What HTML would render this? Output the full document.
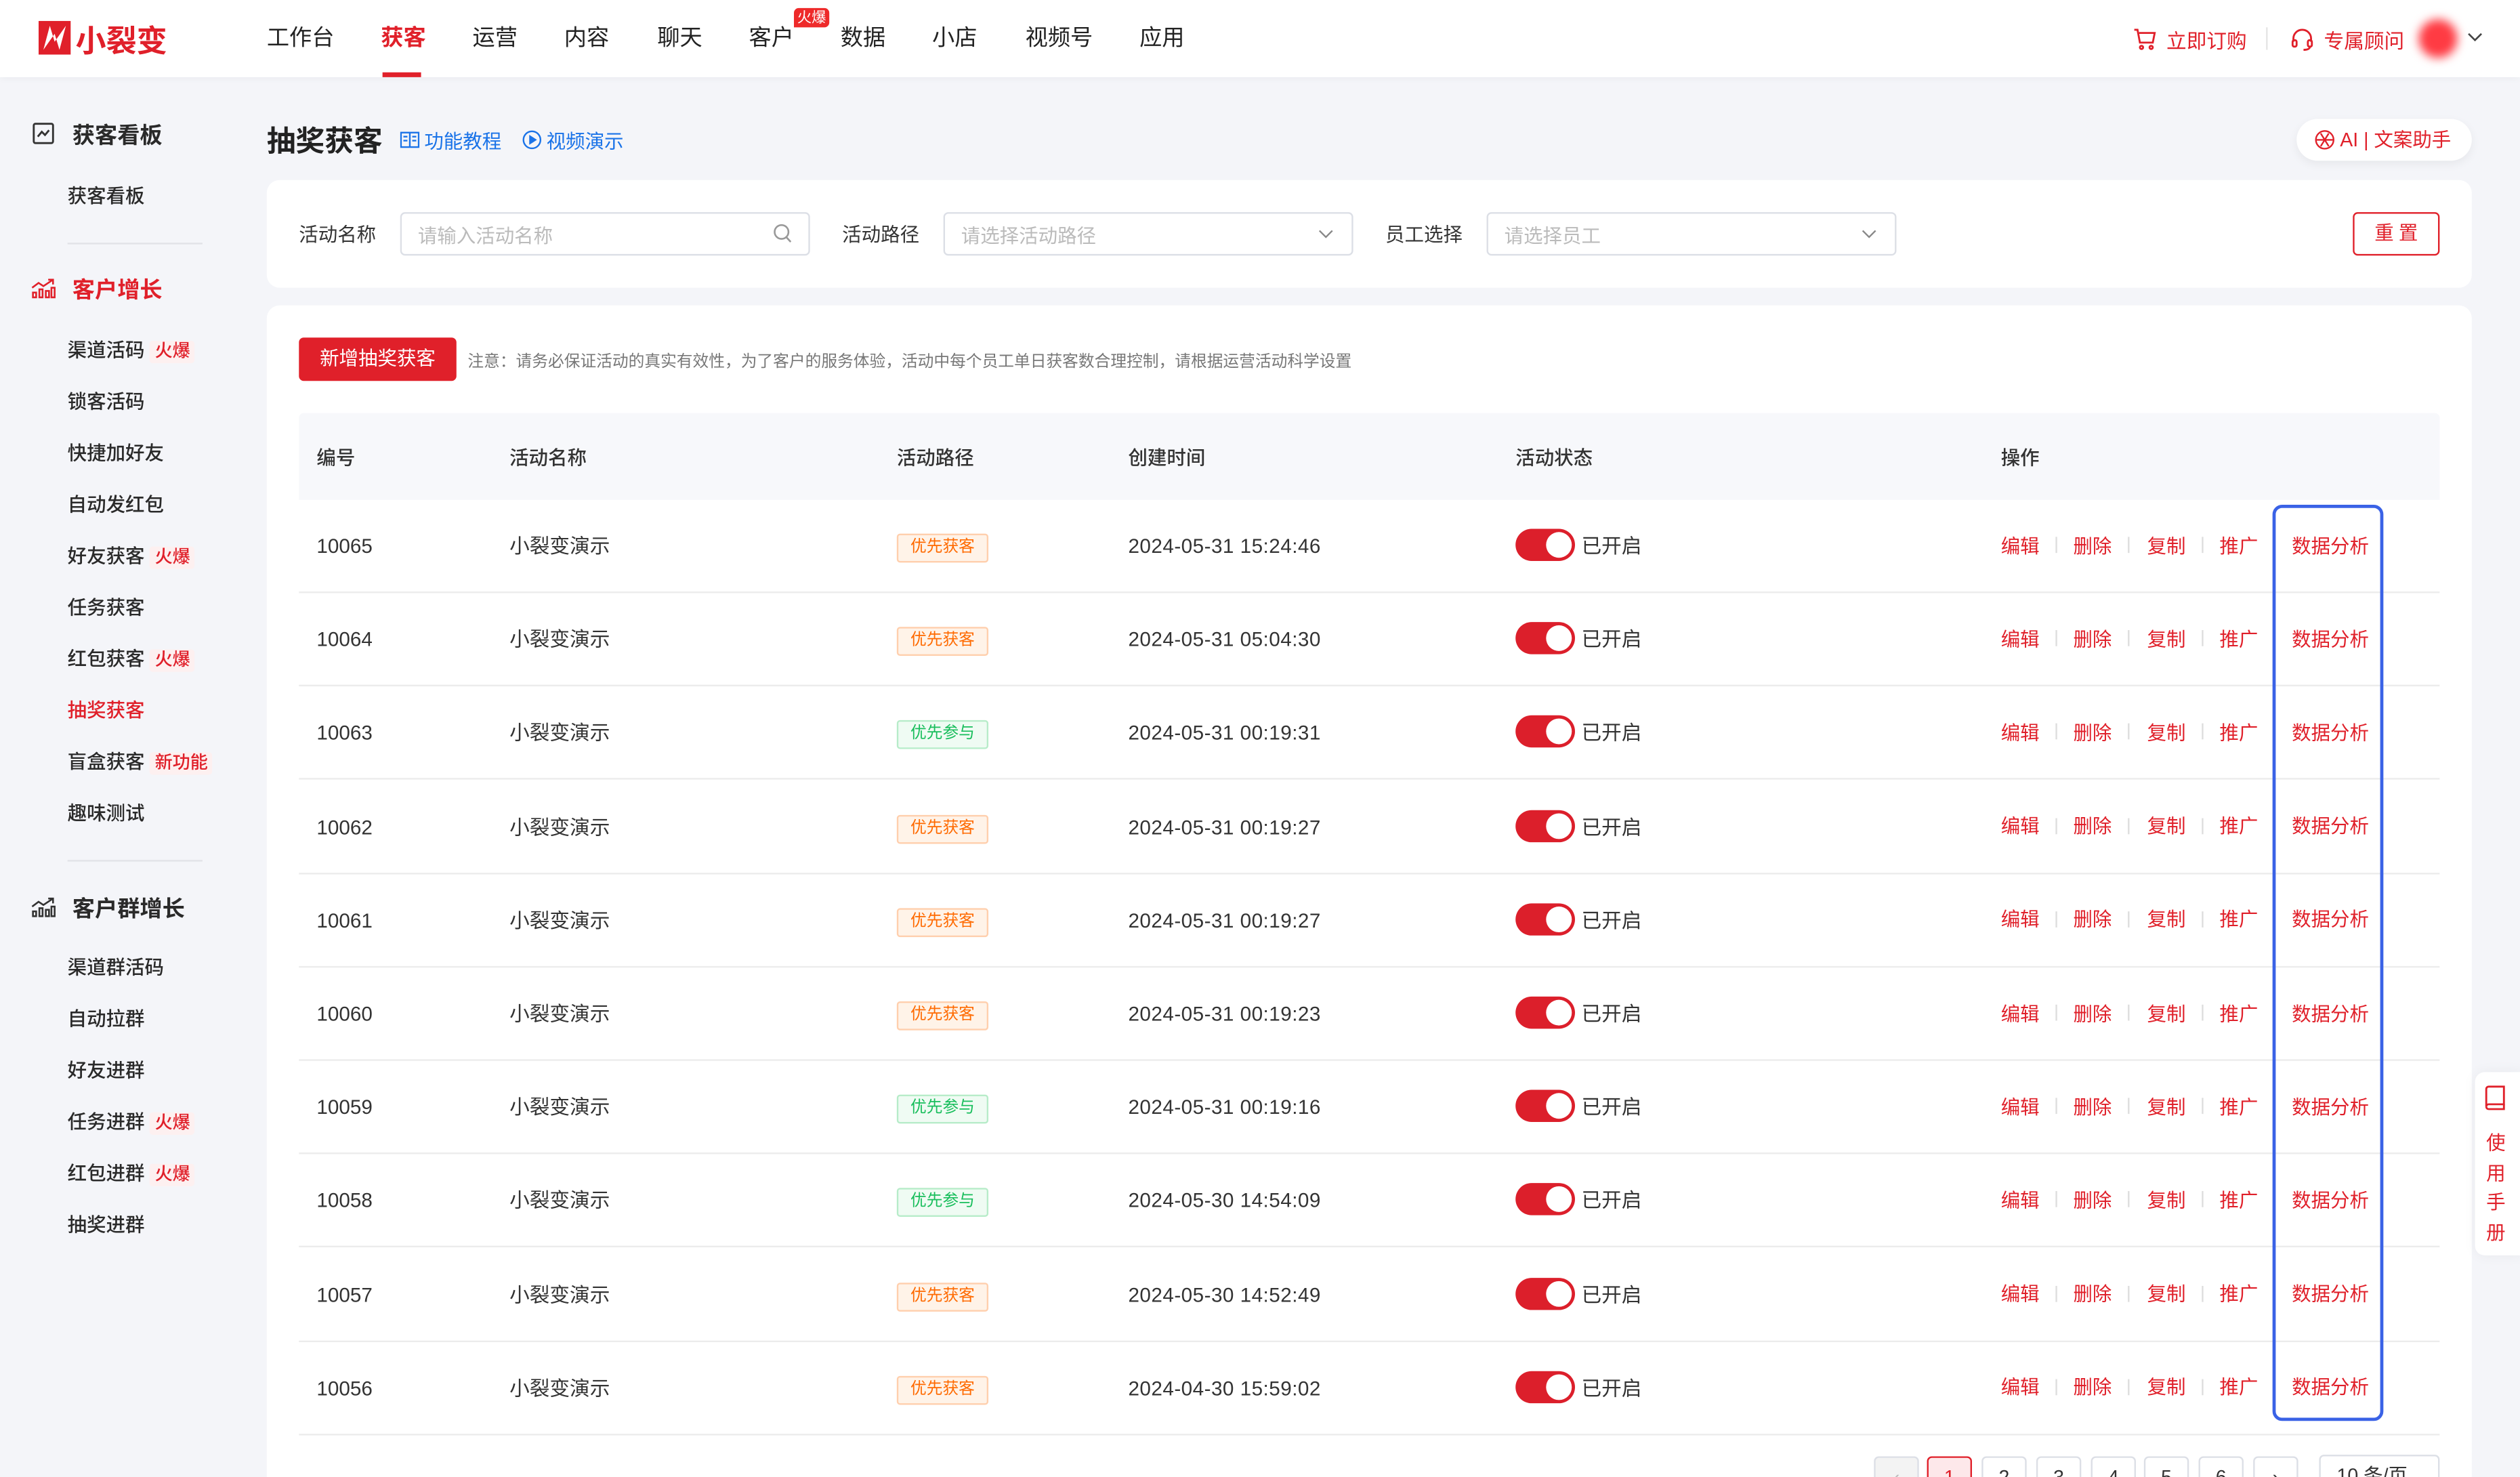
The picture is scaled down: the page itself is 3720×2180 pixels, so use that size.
<!DOCTYPE html>
<html><head><meta charset="utf-8">
<style>
*{margin:0;padding:0;box-sizing:border-box}
html,body{width:3720px;height:2180px;overflow:hidden;background:#f5f6fa}
body{font-family:"Liberation Sans","Noto Sans CJK SC",sans-serif;color:#222}
#root{position:absolute;left:0;top:0;width:1568px;height:919px;transform:scale(2.372449);transform-origin:0 0;overflow:hidden;background:#f4f5f9}
.a{position:absolute;white-space:nowrap}
.hdr{left:0;top:0;width:1568px;height:48px;background:#fff;box-shadow:0 1px 4px rgba(0,0,0,.04)}
.nav{top:13px;font-size:14px;color:#222}
.sb{font-size:12px;color:#2a2a2a;font-weight:500}
.sh{font-size:14px;font-weight:bold;color:#2a2a2a}
.hot{font-size:11px;color:#e0202a;background:#fdf0f0;padding:1px 3px;border-radius:2px}
.card{background:#fff;border-radius:8px}
.lbl{font-size:12px;color:#333}
.inp{height:27px;border:1px solid #dcdfe6;border-radius:3px;background:#fff;font-size:12px;color:#bbb;padding:5px 10px}
.th{font-size:12px;color:#333;font-weight:500;top:276px}
.td{font-size:12.5px;color:#333}
.tag{font-size:10px;width:57px;height:18px;border-radius:2px;text-align:center;line-height:16px}
.or{background:#fff3e8;border:1px solid #ffcfad;color:#ff6a00}
.gr{background:#effbf3;border:1px solid #b7ecc9;color:#19be5c}
.tg{width:37px;height:20px;border-radius:10px;background:#dc1f2b}
.tg:after{content:"";position:absolute;right:2px;top:2px;width:16px;height:16px;border-radius:50%;background:#fff}
.op{font-size:12px;color:#e0202a}
.sep{width:1px;height:10px;background:#ddd}
.ln{height:1px;background:#ececec;left:186px;width:1332px}
.pg{width:28px;height:26px;border:1px solid #dcdfe6;border-radius:3px;background:#fff;font-size:12px;text-align:center;line-height:24px;color:#333}
</style></head><body><div id="root">

<div class="a hdr"></div>
<svg class="a" style="left:24px;top:13px" width="20" height="21" viewBox="0 0 20 21"><rect width="20" height="21" fill="#e0202a"/><path d="M3 18 L7 3 L10 13 L17 3 L13 18 L10 8 Z" fill="#fff"/></svg>
<div class="a" style="left:47px;top:11px;font-size:19px;color:#e0202a;font-weight:bold">小裂变</div>
<div class="a nav" style="left:166px">工作台</div>
<div class="a nav" style="left:237px;color:#e0202a;font-weight:bold">获客</div>
<div class="a" style="left:238px;top:45px;width:24px;height:3px;background:#e0202a"></div>
<div class="a nav" style="left:294px">运营</div>
<div class="a nav" style="left:351px">内容</div>
<div class="a nav" style="left:409px">聊天</div>
<div class="a nav" style="left:466px">客户</div>
<div class="a" style="left:494px;top:5px;font-size:9px;color:#fff;background:#ee2a2a;padding:0 2px;border-radius:3px 3px 3px 0;line-height:12px">火爆</div>
<div class="a nav" style="left:523px">数据</div>
<div class="a nav" style="left:580px">小店</div>
<div class="a nav" style="left:638px">视频号</div>
<div class="a nav" style="left:709px">应用</div>

<svg class="a" style="left:1327px;top:17px" width="15" height="15" viewBox="0 0 15 15" fill="none" stroke="#e0202a" stroke-width="1.2"><path d="M1 1.5h2l1.5 8h8l1.2-6H4"/><circle cx="5.5" cy="12.5" r="1"/><circle cx="11.5" cy="12.5" r="1"/></svg>
<div class="a" style="left:1348px;top:15px;font-size:12.5px;color:#e0202a">立即订购</div>
<div class="a" style="left:1410px;top:17px;width:1px;height:14px;background:#e5e5e5"></div>
<svg class="a" style="left:1425px;top:17px" width="15" height="15" viewBox="0 0 15 15" fill="none" stroke="#e0202a" stroke-width="1.2"><path d="M2 9V7a5.5 5.5 0 0111 0v2"/><rect x="1.5" y="8" width="2.5" height="4" rx="1"/><rect x="11" y="8" width="2.5" height="4" rx="1"/><path d="M12.3 12c0 1.5-2 2-4 2"/></svg>
<div class="a" style="left:1446px;top:15px;font-size:12.5px;color:#e0202a">专属顾问</div>
<div class="a" style="left:1505px;top:12px;width:24px;height:24px;border-radius:50%;background:#ff3b43;filter:blur(3px)"></div>
<svg class="a" style="left:1535px;top:19px" width="10" height="8" viewBox="0 0 10 8" fill="none" stroke="#444" stroke-width="1.1"><path d="M1 2l4 4 4-4"/></svg>

<!-- sidebar -->
<svg class="a" style="left:20px;top:76px" width="14" height="14" viewBox="0 0 14 14" fill="none" stroke="#333" stroke-width="1.2"><rect x="1" y="1" width="12" height="12" rx="1"/><path d="M3.5 9l2.5-3 2 2 2.5-3"/></svg>
<div class="a sh" style="left:45px;top:74px">获客看板</div>
<div class="a sb" style="left:42px;top:113px">获客看板</div>
<div class="a" style="left:42px;top:151px;width:84px;height:1px;background:#e2e3e8"></div>
<svg class="a" style="left:19px;top:172px" width="16" height="14" viewBox="0 0 16 14" fill="none" stroke="#e0202a" stroke-width="1.1"><path d="M1 7l4-3 3 2 6-4"/><path d="M11 2h3v3"/><rect x="1.5" y="10" width="2" height="3"/><rect x="5.5" y="8" width="2" height="5"/><rect x="9.5" y="9" width="2" height="4"/><rect x="13" y="7" width="2" height="6"/></svg>
<div class="a sh" style="left:45px;top:170px;color:#e0202a">客户增长</div>
<div class="a sb" style="left:42px;top:209px">渠道活码 <span class="hot">火爆</span></div>
<div class="a sb" style="left:42px;top:241px">锁客活码</div>
<div class="a sb" style="left:42px;top:273px">快捷加好友</div>
<div class="a sb" style="left:42px;top:305px">自动发红包</div>
<div class="a sb" style="left:42px;top:337px">好友获客 <span class="hot">火爆</span></div>
<div class="a sb" style="left:42px;top:369px">任务获客</div>
<div class="a sb" style="left:42px;top:401px">红包获客 <span class="hot">火爆</span></div>
<div class="a sb" style="left:42px;top:433px;color:#e0202a">抽奖获客</div>
<div class="a sb" style="left:42px;top:465px">盲盒获客 <span class="hot">新功能</span></div>
<div class="a sb" style="left:42px;top:497px">趣味测试</div>
<div class="a" style="left:42px;top:535px;width:84px;height:1px;background:#e2e3e8"></div>
<svg class="a" style="left:19px;top:557px" width="16" height="14" viewBox="0 0 16 14" fill="none" stroke="#333" stroke-width="1.1"><path d="M1 7l4-3 3 2 6-4"/><path d="M11 2h3v3"/><rect x="1.5" y="10" width="2" height="3"/><rect x="5.5" y="8" width="2" height="5"/><rect x="9.5" y="9" width="2" height="4"/><rect x="13" y="7" width="2" height="6"/></svg>
<div class="a sh" style="left:45px;top:555px">客户群增长</div>
<div class="a sb" style="left:42px;top:593px">渠道群活码</div>
<div class="a sb" style="left:42px;top:625px">自动拉群</div>
<div class="a sb" style="left:42px;top:657px">好友进群</div>
<div class="a sb" style="left:42px;top:689px">任务进群 <span class="hot">火爆</span></div>
<div class="a sb" style="left:42px;top:721px">红包进群 <span class="hot">火爆</span></div>
<div class="a sb" style="left:42px;top:753px">抽奖进群</div>

<!-- title -->
<div class="a" style="left:166px;top:74px;font-size:18px;font-weight:bold;color:#222">抽奖获客</div>
<svg class="a" style="left:249px;top:82px" width="12" height="11" viewBox="0 0 12 11" fill="none" stroke="#1a73e8" stroke-width="1"><rect x=".5" y=".5" width="11" height="9"/><path d="M6 .5v9M2 3h2.5M2 5.5h2.5M7.5 3H10M7.5 5.5H10"/></svg>
<div class="a" style="left:264px;top:79px;font-size:12px;color:#1a73e8">功能教程</div>
<svg class="a" style="left:325px;top:81px" width="12" height="12" viewBox="0 0 12 12" fill="none" stroke="#1a73e8" stroke-width="1"><circle cx="6" cy="6" r="5.3"/><path d="M4.8 3.8v4.4L8.2 6z" fill="#1a73e8"/></svg>
<div class="a" style="left:340px;top:79px;font-size:12px;color:#1a73e8">视频演示</div>
<div class="a" style="left:1429px;top:74px;width:109px;height:26px;background:#fff;border-radius:13px;box-shadow:0 2px 6px rgba(0,0,0,.06)"></div>
<svg class="a" style="left:1440px;top:80px" width="13" height="14" viewBox="0 0 13 14" fill="none" stroke="#e0202a" stroke-width="1"><circle cx="6.5" cy="7" r="5.5"/><path d="M4 3l5 8M9 3L4 11M1.5 7h10"/></svg>
<div class="a" style="left:1456px;top:78px;font-size:12px;color:#e0202a">AI | 文案助手</div>

<!-- filter card -->
<div class="a card" style="left:166px;top:112px;width:1372px;height:67px"></div>
<div class="a lbl" style="left:186px;top:137px">活动名称</div>
<div class="a inp" style="left:249px;top:132px;width:255px">请输入活动名称</div>
<svg class="a" style="left:481px;top:139px" width="12" height="13" viewBox="0 0 12 13" fill="none" stroke="#999" stroke-width="1.1"><circle cx="5.3" cy="5.3" r="4.3"/><path d="M8.5 8.8l2.5 2.7"/></svg>
<div class="a lbl" style="left:524px;top:137px">活动路径</div>
<div class="a inp" style="left:587px;top:132px;width:255px">请选择活动路径</div>
<svg class="a" style="left:820px;top:142px" width="10" height="7" viewBox="0 0 10 7" fill="none" stroke="#888" stroke-width="1"><path d="M1 1.5l4 4 4-4"/></svg>
<div class="a lbl" style="left:862px;top:137px">员工选择</div>
<div class="a inp" style="left:925px;top:132px;width:255px">请选择员工</div>
<svg class="a" style="left:1158px;top:142px" width="10" height="7" viewBox="0 0 10 7" fill="none" stroke="#888" stroke-width="1"><path d="M1 1.5l4 4 4-4"/></svg>
<div class="a" style="left:1464px;top:132px;width:54px;height:27px;border:1px solid #e0202a;border-radius:3px;color:#e0202a;font-size:12px;text-align:center;line-height:25px;letter-spacing:3px;padding-left:3px">重置</div>

<!-- table card -->
<div class="a card" style="left:166px;top:190px;width:1372px;height:740px"></div>
<div class="a" style="left:186px;top:210px;width:98px;height:27px;background:#e0202a;border-radius:3px;color:#fff;font-size:12px;text-align:center;line-height:26px">新增抽奖获客</div>
<div class="a" style="left:291px;top:216px;font-size:10px;color:#777">注意：请务必保证活动的真实有效性，为了客户的服务体验，活动中每个员工单日获客数合理控制，请根据运营活动科学设置</div>
<div class="a" style="left:186px;top:257px;width:1332px;height:54px;background:#f7f8fb;border-radius:3px 3px 0 0"></div>
<div class="a th" style="left:197px">编号</div>
<div class="a th" style="left:317px">活动名称</div>
<div class="a th" style="left:558px">活动路径</div>
<div class="a th" style="left:702px">创建时间</div>
<div class="a th" style="left:943px">活动状态</div>
<div class="a th" style="left:1245px">操作</div>

<div id="rows"></div>

<div class="a" style="left:1414px;top:314px;width:69px;height:570px;border:2.5px solid #3a62e6;border-radius:6px"></div>

<!-- pagination -->
<div class="a pg" style="left:1166px;top:906px;background:#f3f3f3;color:#bbb">‹</div>
<div class="a pg" style="left:1199px;top:906px;border-color:#e0202a;background:#fde8ea;color:#e0202a">1</div>
<div class="a pg" style="left:1233px;top:906px">2</div>
<div class="a pg" style="left:1267px;top:906px">3</div>
<div class="a pg" style="left:1301px;top:906px">4</div>
<div class="a pg" style="left:1334px;top:906px">5</div>
<div class="a pg" style="left:1368px;top:906px">6</div>
<div class="a pg" style="left:1402px;top:906px">›</div>
<div class="a pg" style="left:1443px;top:905px;width:75px;text-align:left;padding-left:10px">10 条/页 ⌄</div>

<!-- right float -->
<div class="a" style="left:1540px;top:667px;width:30px;height:114px;background:#fff;border-radius:6px 0 0 6px;box-shadow:0 0 8px rgba(0,0,0,.05)"></div>
<svg class="a" style="left:1545px;top:675px" width="15" height="16" viewBox="0 0 15 16" fill="none" stroke="#e0202a" stroke-width="1.2"><path d="M2 2.5a1.5 1.5 0 011.5-1.5H13v11H3.5A1.5 1.5 0 002 13.5z"/><path d="M2 13.5A1.5 1.5 0 003.5 15H13v-3"/></svg>
<div class="a" style="left:1547px;top:702px;font-size:12px;color:#e0202a;white-space:normal;width:14px;line-height:18.5px">使用手册</div>

<script>
var d=[["10065","2024-05-31 15:24:46","o"],["10064","2024-05-31 05:04:30","o"],["10063","2024-05-31 00:19:31","g"],["10062","2024-05-31 00:19:27","o"],["10061","2024-05-31 00:19:27","o"],["10060","2024-05-31 00:19:23","o"],["10059","2024-05-31 00:19:16","g"],["10058","2024-05-30 14:54:09","g"],["10057","2024-05-30 14:52:49","o"],["10056","2024-04-30 15:59:02","o"]];
var h="";
for(var i=0;i<10;i++){var c=339+i*58.2;var t=c-8;
h+='<div class="a td" style="left:197px;top:'+(t+2)+'px">'+d[i][0]+'</div>';
h+='<div class="a td" style="left:317px;top:'+(t-2)+'px">小裂变演示</div>';
h+='<div class="a tag '+(d[i][2]=="o"?"or":"gr")+'" style="left:558px;top:'+(c-7)+'px">'+(d[i][2]=="o"?"优先获客":"优先参与")+'</div>';
h+='<div class="a td" style="left:702px;top:'+(t+2)+'px;letter-spacing:.2px">'+d[i][1]+'</div>';
h+='<div class="a tg" style="left:943px;top:'+(c-10)+'px"></div>';
h+='<div class="a td" style="left:984px;top:'+(t-2)+'px">已开启</div>';
var ops=[["编辑",1245],["删除",1290],["复制",1336],["推广",1381],["数据分析",1426]];
for(var j=0;j<5;j++)h+='<div class="a op" style="left:'+ops[j][1]+'px;top:'+(t-0.5)+'px">'+ops[j][0]+'</div>';
[1279,1324,1370].forEach(function(x){h+='<div class="a sep" style="left:'+x+'px;top:'+(c-5)+'px"></div>';});
h+='<div class="a ln" style="top:'+(c+29)+'px"></div>';}
document.getElementById("rows").outerHTML=h;
</script>
</div></body></html>
